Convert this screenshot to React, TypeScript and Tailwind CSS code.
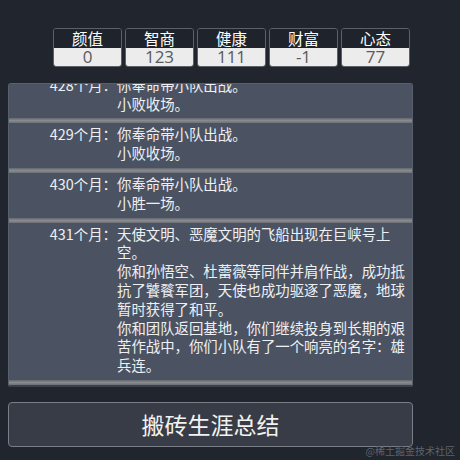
import * as React from 'react'

const stats = [
  { name: '颜值', value: '0' },
  { name: '智商', value: '123' },
  { name: '健康', value: '111' },
  { name: '财富', value: '-1' },
  { name: '心态', value: '77' },
]

const logs: { month: number; lines: string[] }[] = [
  { month: 428, lines: ['你奉命带小队出战。', '小败收场。'] },
  { month: 429, lines: ['你奉命带小队出战。', '小败收场。'] },
  { month: 430, lines: ['你奉命带小队出战。', '小胜一场。'] },
  {
    month: 431,
    lines: [
      '天使文明、恶魔文明的飞船出现在巨峡号上空。',
      '你和孙悟空、杜蕾薇等同伴并肩作战，成功抵抗了饕餮军团，天使也成功驱逐了恶魔，地球暂时获得了和平。',
      '你和团队返回基地，你们继续投身到长期的艰苦作战中，你们小队有了一个响亮的名字：雄兵连。',
    ],
  },
]

const StatBox: React.FC<{ name: string; value: string }> = ({ name, value }) => (
  <div className="w-[69px] rounded-[3px] border border-[#5b606a] overflow-hidden">
    <div className="h-[19px] flex items-center justify-center bg-[#1e232c] text-white text-[15.5px] leading-[19px]">
      {name}
    </div>
    <div
      className="h-[18px] flex items-center justify-center bg-[#ececec] text-[#5a5a5a] text-[17px] leading-[18px]"
      style={{ fontFamily: '"Open Sans", "Noto Sans", sans-serif' }}
    >
      {value}
    </div>
  </div>
)

const LogEntry: React.FC<{ month: number; lines: string[] }> = ({ month, lines }) => (
  <div className="shrink-0 bg-[#4b5362]">
    <div className="flex pt-[2px] pb-[5px] text-[14.4px] leading-[18.8px] text-[#eef0f3]">
      <div className="w-[108px] shrink-0 text-right">{month}个月：</div>
      <div className="flex-1 pr-1">
        {lines.map((line, i) => (
          <div key={i}>{line}</div>
        ))}
      </div>
    </div>
    <div className="h-[5px] bg-gradient-to-b from-[#636770] via-[#8a8b8e] to-[#6d7077]" />
  </div>
)

export default function App() {
  return (
    <div
      className="relative w-[460px] h-[460px] bg-[#20252e] overflow-hidden"
      style={{ fontFamily: '"Noto Sans CJK SC", "Noto Sans", sans-serif' }}
    >
      <div className="flex flex-col pt-[28px] px-2 w-[421px]">
        <div className="flex gap-[3px] ml-[45px]">
          {stats.map(s => (
            <StatBox key={s.name} name={s.name} value={s.value} />
          ))}
        </div>

        <div className="mt-[16px] h-[304px] flex flex-col justify-end overflow-hidden rounded-[3px] border-x border-t border-[#59606c] bg-[#3b4049] pb-[2px]">
          {logs.map(l => (
            <LogEntry key={l.month} month={l.month} lines={l.lines} />
          ))}
        </div>

        <button className="mt-[15px] h-[45px] w-full rounded-[4px] border border-[#7a7e86] bg-[#383c46] text-[#f2f2f2] text-[23px] leading-none">
          搬砖生涯总结
        </button>
      </div>

      <div className="absolute right-[5px] bottom-[4px] text-[10px] leading-none text-[#5d6470]">
        @稀土掘金技术社区
      </div>
    </div>
  )
}
